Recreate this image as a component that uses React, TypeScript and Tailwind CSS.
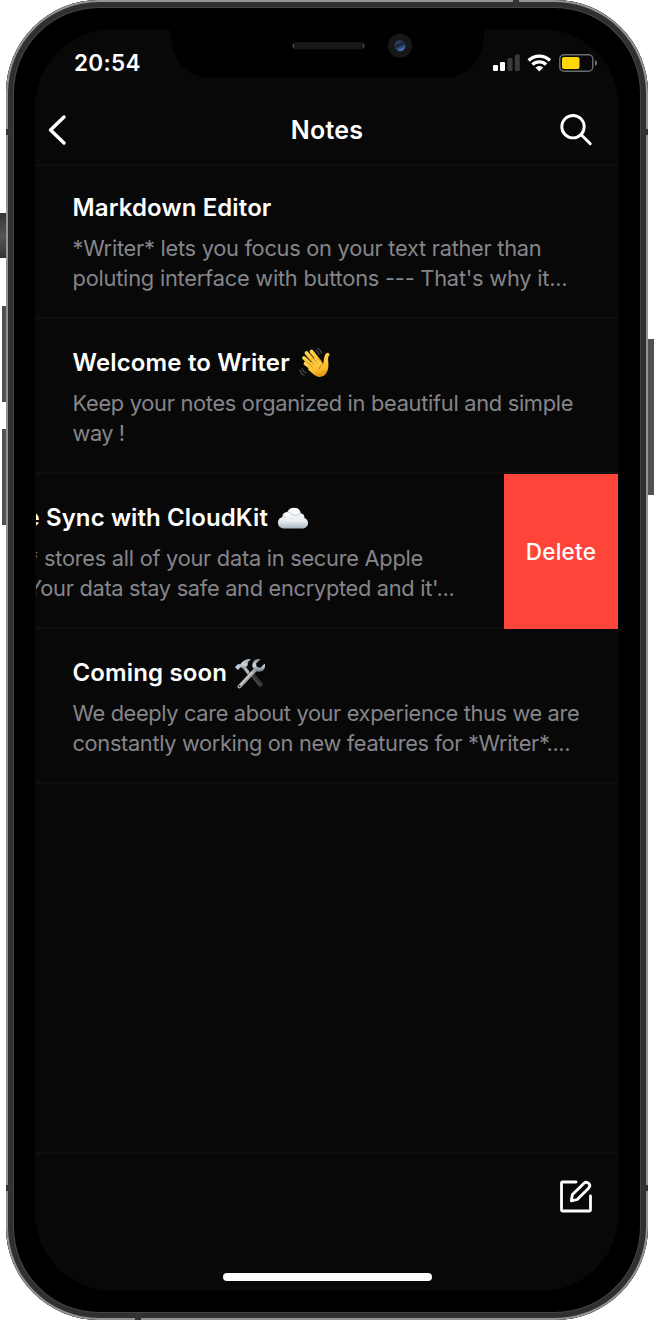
import React from "react";

function StatusBar() {
  return (
    <div className="flex h-[67px] items-center justify-between pl-[38px] pr-[20px]">
      <span className="pt-[2px] text-[22.5px] font-semibold leading-none tracking-[0.35px] text-white">20:54</span>
      <svg width="106" height="20" viewBox="492 53 106 20" className="block">
        <rect x="493" y="65" width="5" height="6" rx="1.3" fill="#fff" />
        <rect x="500" y="62" width="5" height="9" rx="1.3" fill="#fff" />
        <rect x="507.500" y="58" width="5" height="13" rx="1.300" fill="#3a3a3a" />
        <rect x="514.800" y="54.500" width="5" height="16.500" rx="1.300" fill="#3a3a3a" />
        <g fill="none" stroke="#fff" strokeWidth="3.200">
          <path d="M528.600 60.500a15.200 15.200 0 0 1 21.400 0" />
          <path d="M532.500 64.600a9.700 9.700 0 0 1 13.600 0" />
        </g>
        <path d="M535.400 67.600a5.500 5.500 0 0 1 7.800 0l-3.900 3.800Z" fill="#fff" />
        <rect x="559.800" y="54.800" width="33" height="16.400" rx="4.200" fill="none" stroke="#6b6b6b" strokeWidth="1.500" />
        <rect x="562" y="57" width="17.500" height="12" rx="2" fill="#ffd60a" />
        <path d="M595 60v6c1.300-.5 2-1.600 2-3s-.7-2.500-2-3Z" fill="#777" />
      </svg>
    </div>
  );
}

function NavBar() {
  return (
    <div className="grid h-[70px] grid-cols-3 items-center border-b-2 border-[#0f0f10] pl-[12px] pr-[26px]">
      <svg width="32" height="34" viewBox="48 113 32 34" fill="none" stroke="#fff" strokeWidth="3.500" strokeLinecap="round" strokeLinejoin="round">
        <path d="M64 117 50.500 130 64 143" />
      </svg>
      <h1 className="pl-[14px] text-center text-[25px] font-semibold leading-none tracking-[0.25px] text-white">Notes</h1>
      <svg className="justify-self-end" width="32" height="34" viewBox="559.500 113 32 34" fill="none" stroke="#fff" strokeWidth="2.900" strokeLinecap="round">
        <circle cx="572.500" cy="126.700" r="11.200" />
        <path d="m581 135 8.700 8.800" />
      </svg>
    </div>
  );
}

function Wave() {
  return (
    <svg width="32" height="32" viewBox="0 0 32 32" className="block shrink-0" role="img">
      <defs>
        <linearGradient id="hand" x1="0" y1="0" x2="0.3" y2="1">
          <stop offset="0" stopColor="#ffd64f" />
          <stop offset="0.700" stopColor="#fdc02f" />
          <stop offset="1" stopColor="#e89b19" />
        </linearGradient>
      </defs>
      <g fill="none" stroke="url(#hand)" strokeWidth="3.700" strokeLinecap="round">
        <path d="M12.500 4.500 21 15" />
        <path d="M7.500 6 18 18" />
        <path d="M5 11 16 21" />
        <path d="M6.500 16.500 16 24" />
        <path d="M28.600 7.700c-1.800 1.400-1.900 4-1.800 7" />
      </g>
      <path d="M16 10 24.300 16.500c.5-3 .4-6 2.700-7.500l2.200 1c-.5 3 .7 7 .1 10-.5 5-3 9-7.300 9.800-5 .8-8-3-13-7.300L12 16Z" fill="url(#hand)" />
      <g fill="none" stroke="#b8771f" strokeWidth=".8" strokeLinecap="round">
        <path d="m11 7 6.500 8M8 10l7 7.500M8 15l5.500 5M24 17c-2 1-3.400 2.500-3.600 5" />
      </g>
      <g fill="none" stroke="#4a4a4c" strokeWidth="1.200" strokeLinecap="round">
        <path d="M16.700 3.300c1.700.9 3 2.300 3.600 4M18.700 1.300c2 1.200 3.200 2.800 4 5M3 21.500c.7 2 2 3.400 4 4.300M.8 23c.8 2.500 2.200 4.200 4.500 5.300" />
      </g>
    </svg>
  );
}

function Cloud() {
  return (
    <svg width="32" height="32" viewBox="0 0 32 32" className="block shrink-0" role="img">
      <defs>
        <linearGradient id="cloud" x1="0" y1="0" x2="0" y2="1">
          <stop offset="0" stopColor="#fff" />
          <stop offset=".65" stopColor="#e8edf1" />
          <stop offset="1" stopColor="#a9b5bf" />
        </linearGradient>
      </defs>
      <path d="M7.500 26.500C3.500 26.500 1 24 1 20.700c0-3.200 2-5.200 4.500-5.700C5.300 11.700 7.500 10 10.500 10c1.200-3 3.400-4.300 6.500-4.300 4 0 6.500 2.300 6.700 5.600 2.600.2 4 2 3.700 4.600 2.400.9 3.600 2.600 3.600 5 0 3.400-2.500 5.600-6.500 5.600Z" fill="url(#cloud)" />
      <path d="M10.500 10c2.200-.2 3.800.8 4.300 2.300 1.700.8 3 1.800 5 .8 1.700-.9 2.800-1.700 3.900-1.800M5.500 15c1.300-.2 2.500 0 3.400.7" fill="none" stroke="#c4ced7" strokeWidth="1" />
    </svg>
  );
}

function Tools() {
  return (
    <svg width="32" height="32" viewBox="0 0 32 32" className="block shrink-0" role="img">
      <defs>
        <linearGradient id="steel" x1="0" y1="0" x2="0" y2="1">
          <stop offset="0" stopColor="#8795a0" />
          <stop offset=".5" stopColor="#d0d6da" />
          <stop offset="1" stopColor="#687580" />
        </linearGradient>
      </defs>
      <path d="m12 10 4.500 6-2.500 2-5-6.500Z" fill="#aeb6bd" />
      <path d="m14.500 16 3.500-2 10.800 12.400c1.100 1.700-2.500 4.700-4 3.300Z" fill="#333638" />
      <path d="m16 17 9.500 11" stroke="#55595c" strokeWidth="1" />
      <path d="M5.500 29.500 21 13" stroke="#a6a3a2" strokeWidth="4" strokeLinecap="round" />
      <path d="M5.200 28.800 18 15.500" stroke="#d4d1cf" strokeWidth="1.200" strokeLinecap="round" />
      <circle cx="5.600" cy="29" r=".9" fill="#292b2d" />
      <path d="M26.500 2.200 22 6.500l.8 3.500 3.700.8 4.300-4.300c.8 3.800-.8 7.500-4.500 8-2 .3-3 .2-4.200-.3l-3.300-3.400c-.6-1.300-.7-2.700-.2-4.300.9-3.400 4.400-5.100 7.900-4.300Z" fill="url(#steel)" />
      <path d="M1 10.200 4.200 7l2 .6C8.200 4 11.500 2 17 2.200c-2.300 1.500-3.600 3.400-3.300 6l-3.600 4-3.400-2-2.500 3.100Z" fill="url(#steel)" />
      <path d="m1.300 10 3-2.800 2 2.300-2.800 3Z" fill="#b9cedb" />
      <path d="M7 7.500c2-3 5-4.600 9-4.800" stroke="#dde1e4" strokeWidth=".9" fill="none" />
    </svg>
  );
}

type Note = {
  title: string;
  titleClass: string;
  icon?: React.ReactNode;
  lines: { text: string; className: string }[];
};

function NoteBody({ note }: { note: Note }) {
  return (
    <div className="flex w-[582px] shrink-0 flex-col whitespace-nowrap pl-[36.5px] pt-[27px]">
      <div className="flex h-[34px] items-center gap-[9px]">
        <h2 className={`text-[24px] font-semibold leading-[34px] text-white ${note.titleClass}`}>{note.title}</h2>
        {note.icon}
      </div>
      <div className="mt-[9px] text-[21.8px] leading-[29.700px] text-[#85858a]">
        {note.lines.map((line) => (
          <p key={line.text} className={line.className}>{line.text}</p>
        ))}
      </div>
    </div>
  );
}

const markdown: Note = {
  title: "Markdown Editor",
  titleClass: "tracking-[0.12px]",
  lines: [
    { text: "*Writer* lets you focus on your text rather than", className: "tracking-[-0.27px]" },
    { text: "poluting interface with buttons --- That's why it...", className: "tracking-[-0.22px]" },
  ],
};
const welcome: Note = {
  title: "Welcome to Writer",
  titleClass: "tracking-[0.15px]",
  icon: <Wave />,
  lines: [
    { text: "Keep your notes organized in beautiful and simple", className: "tracking-[-0.29px]" },
    { text: "way !", className: "tracking-[-0.45px]" },
  ],
};
const sync: Note = {
  title: "e Sync with CloudKit",
  titleClass: "-ml-[2px] tracking-[0.1px]",
  icon: <Cloud />,
  lines: [
    { text: "* stores all of your data in secure Apple", className: "tracking-[-0.27px]" },
    { text: "Your data stay safe and encrypted and it'...", className: "tracking-[-0.3px]" },
  ],
};
const soon: Note = {
  title: "Coming soon",
  titleClass: "-mr-[2px] tracking-[0.15px]",
  icon: <Tools />,
  lines: [
    { text: "We deeply care about your experience thus we are", className: "tracking-[-0.36px]" },
    { text: "constantly working on new features for *Writer*....", className: "tracking-[-0.34px]" },
  ],
};

function Row({ children }: { children: React.ReactNode }) {
  return <li className="flex h-[155px] overflow-hidden border-b-2 border-[#0f0f10]">{children}</li>;
}

function Screen() {
  return (
    <main className="flex h-[1262px] w-[584px] flex-col overflow-hidden rounded-[78px] bg-[#080808] px-px">
      <StatusBar />
      <NavBar />
      <ul className="-mt-[2px] flex flex-1 flex-col">
        <Row><NoteBody note={markdown} /></Row>
        <Row><NoteBody note={welcome} /></Row>
        <li className="flex h-[155px] overflow-hidden">
          <div className="flex w-[468px] overflow-hidden border-b-2 border-[#0f0f10]">
            <div className="-ml-[45px] flex">
              <NoteBody note={sync} />
            </div>
          </div>
          <button className="flex w-[114px] items-center justify-center bg-[#ff4539] text-[22.5px] font-medium tracking-[0.25px] text-white">Delete</button>
        </li>
        <Row><NoteBody note={soon} /></Row>
      </ul>
      <footer className="flex h-[139px] flex-col border-t-2 border-[#0f0f10]">
        <div className="flex h-[84px] items-center justify-end pr-[24px]">
          <svg width="36" height="36" viewBox="558 1178 36 36" fill="none" stroke="#fff" strokeWidth="2.800" strokeLinecap="round" strokeLinejoin="round">
            <path d="M576 1182h-13.500a1 1 0 0 0-1 1v27a1 1 0 0 0 1 1H589.500a1 1 0 0 0 1-1V1196" />
            <path d="m571.300 1200.800 1.200-6.300 11.500-11.300c3-2.800 7.700 1.600 4.800 4.700L577.300 1199.500Z" />
          </svg>
        </div>
        <div className="flex justify-center pt-[35px]">
          <div className="h-[8px] w-[209px] rounded-full bg-white" />
        </div>
      </footer>
    </main>
  );
}

export default function App() {
  return (
    <div className="relative h-[1320px] w-[654px] overflow-hidden bg-white px-[6px] font-['Inter','Liberation_Sans',sans-serif]">
      <div className="absolute left-0 top-[213px] h-[45px] w-[6px] bg-linear-to-b from-[#353535] via-[#555] to-[#353535]" />
      <div className="absolute left-[2px] top-[306px] h-[96px] w-[4px] bg-[#515151]" />
      <div className="absolute left-[2px] top-[429px] h-[96px] w-[4px] bg-[#515151]" />
      <div className="absolute right-0 top-[339px] h-[156px] w-[6px] bg-[#505050]" />
      <div className="h-[1320px] w-[642px] rounded-[93px] bg-black px-[29px] pt-[29px] shadow-[inset_0_0_0_2px_#949494,inset_0_0_0_7px_#303030,inset_0_0_0_8px_#444]">
        <Screen />
      </div>
      <div className="absolute left-[6px] top-[129px] h-[6px] w-[7px] bg-[#333]" />
      <div className="absolute left-[641px] top-[129px] h-[6px] w-[7px] bg-[#333]" />
      <div className="absolute left-[6px] top-[1185px] h-[6px] w-[7px] bg-[#333]" />
      <div className="absolute left-[641px] top-[1185px] h-[6px] w-[7px] bg-[#333]" />
      <div className="absolute left-[513px] top-0 h-[7px] w-[6px] bg-[#333]" />
      <div className="absolute left-[135px] top-[1313px] h-[7px] w-[6px] bg-[#333]" />
      <svg className="absolute left-[160px] top-[28px]" width="336" height="52" viewBox="160 28 336 52">
        <path d="M165 28v1c4.500 0 6 2 6 6 0 25 17 43 43 43h227c26 0 43-18 43-43 0-4 2-6 6-6v-1Z" fill="#000" />
        <rect x="292.500" y="42" width="72" height="7.500" rx="3.500" fill="#171717" />
        <path d="M293.300 44v3.500M363.700 44v3.500" stroke="#666" strokeWidth="1" />
        <circle cx="400" cy="45.700" r="12" fill="#171717" />
        <defs>
          <linearGradient id="lens" x1="0.2" y1="0" x2="0.700" y2="1">
            <stop offset="0" stopColor="#435a80" />
            <stop offset=".45" stopColor="#182030" />
            <stop offset="1" stopColor="#5585db" />
          </linearGradient>
        </defs>
        <circle cx="400" cy="45.700" r="5.500" fill="url(#lens)" />
      </svg>
    </div>
  );
}
